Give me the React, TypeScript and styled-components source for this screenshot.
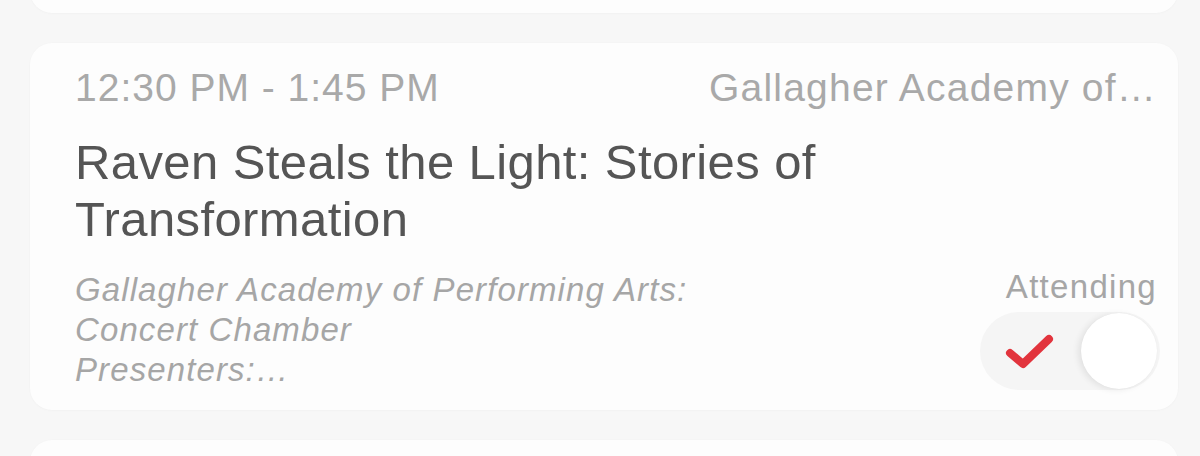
import React from "react";
import styled, { createGlobalStyle } from "styled-components";

const Global = createGlobalStyle`
  html, body { margin: 0; padding: 0; background: #f7f7f7; }
  body { font-family: "Liberation Sans", Arial, sans-serif; }
`;

const Viewport = styled.div`
  height: 456px;
  overflow: hidden;
  background: #f7f7f7;
`;

const List = styled.div<{ $scroll: number }>`
  display: flex;
  flex-direction: column;
  gap: 30px;
  padding: 0 22px 0 30px;
  margin-top: ${(p) => -p.$scroll}px;
`;

const Card = styled.div<{ $h?: number }>`
  background: #fdfdfd;
  border-radius: 22px;
  box-shadow: 0 0 0 1px rgba(0, 0, 0, 0.008), 0 1px 3px rgba(0, 0, 0, 0.015);
  ${(p) => (p.$h ? `height: ${p.$h}px;` : "")}
  padding: ${(p) => (p.$h ? "0" : "21px 21px 20px 45px")};
  display: flex;
  flex-direction: column;
`;

const HeaderRow = styled.div`
  display: flex;
  justify-content: space-between;
  align-items: baseline;
  gap: 40px;
`;

const Time = styled.span`
  font-size: 39px;
  line-height: 48px;
  letter-spacing: 1px;
  color: #a9a9a9;
  white-space: nowrap;
`;

const Place = styled.span`
  font-size: 39px;
  line-height: 48px;
  color: #a9a9a9;
  letter-spacing: 1.2px;
  white-space: nowrap;
  overflow: hidden;
  text-overflow: ellipsis;
`;

const Title = styled.h2`
  margin: 22px 0 0;
  font-weight: 400;
  font-size: 49px;
  line-height: 57px;
  letter-spacing: 0.4px;
  color: #555555;
  max-width: 900px;
`;

const BottomRow = styled.div`
  margin-top: 22px;
  display: flex;
  justify-content: space-between;
  align-items: flex-end;
`;

const Venue = styled.div`
  font-style: italic;
  font-size: 33px;
  line-height: 40px;
  letter-spacing: 1.1px;
  color: #a6a6a6;
  max-width: 700px;
`;

const Side = styled.div`
  display: flex;
  flex-direction: column;
  align-items: flex-end;
  gap: 8px;
`;

const Label = styled.span`
  font-size: 33px;
  line-height: 34px;
  letter-spacing: 1.3px;
  color: #a6a6a6;
`;

const Switch = styled.button`
  width: 180px;
  height: 78px;
  margin-right: -3px;
  border: none;
  padding: 0 3px 0 0;
  border-radius: 39px;
  background: #f5f5f5;
  display: flex;
  align-items: center;
  justify-content: space-between;
  cursor: pointer;
`;

const Check = styled.svg`
  width: 52px;
  height: 40px;
  margin-left: 23px;
`;

const Knob = styled.span`
  width: 76px;
  height: 76px;
  border-radius: 50%;
  background: #ffffff;
  box-shadow: -3px 1px 6px rgba(0, 0, 0, 0.08), 0 0 1px rgba(0, 0, 0, 0.05);
`;

export default function App() {
  return (
    <>
      <Global />
      <Viewport>
        <List $scroll={87}>
          <Card $h={100} />
          <Card>
            <HeaderRow>
              <Time>12:30 PM - 1:45 PM</Time>
              <Place>Gallagher Academy of…</Place>
            </HeaderRow>
            <Title>Raven Steals the Light: Stories of Transformation</Title>
            <BottomRow>
              <Venue>
                <div>Gallagher Academy of Performing Arts: Concert Chamber</div>
                <div>Presenters:…</div>
              </Venue>
              <Side>
                <Label>Attending</Label>
                <Switch aria-label="Attending">
                  <Check viewBox="0 0 52 40">
                    <path
                      d="M7 22 L20 33 L46 8"
                      fill="none"
                      stroke="#e2343d"
                      strokeWidth="8"
                      strokeLinecap="round"
                      strokeLinejoin="round"
                    />
                  </Check>
                  <Knob />
                </Switch>
              </Side>
            </BottomRow>
          </Card>
          <Card $h={120} />
        </List>
      </Viewport>
    </>
  );
}
